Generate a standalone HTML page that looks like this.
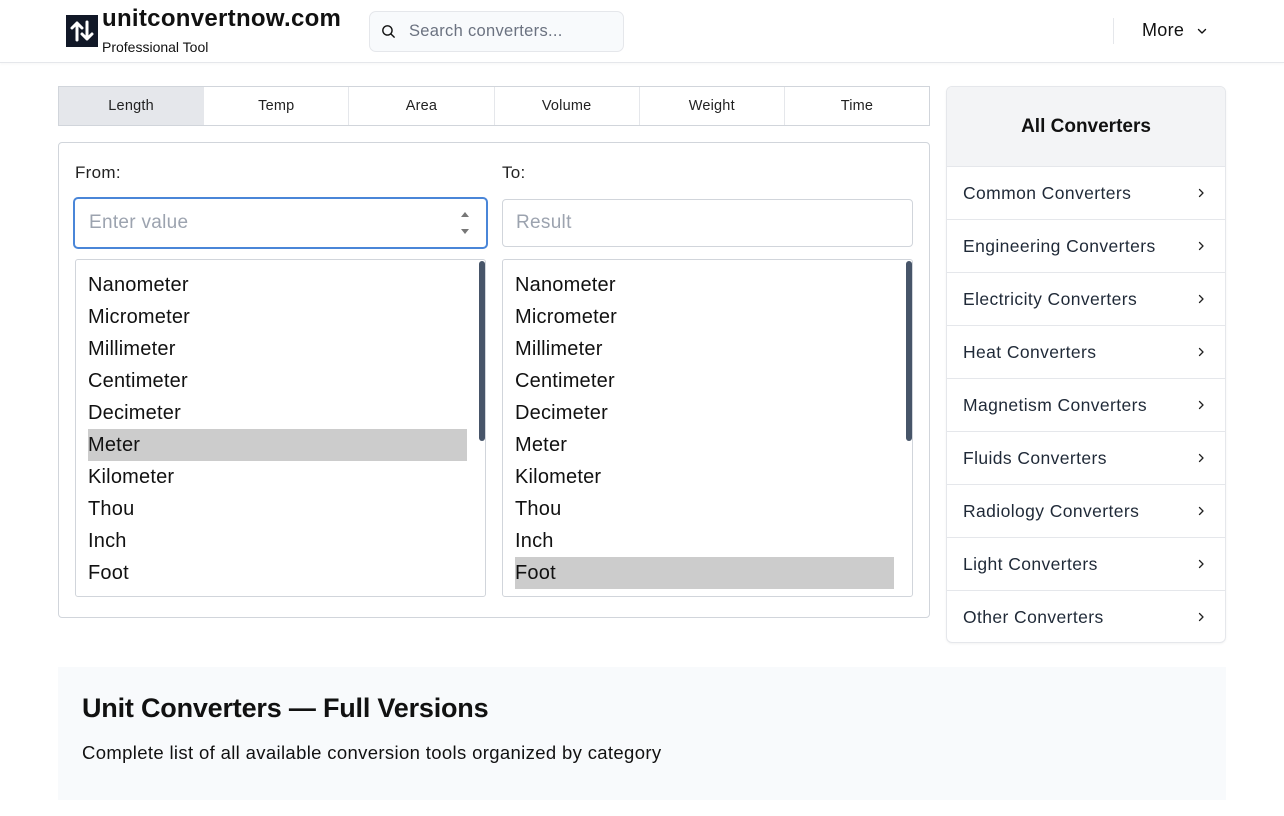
<!DOCTYPE html>
<html><head><style>
*{box-sizing:border-box;margin:0;padding:0}
body{width:1284px;height:816px;background:#fff;font-family:"Liberation Sans",sans-serif;color:#111;position:relative;overflow:hidden}
.a{position:absolute}
.hdr{left:0;top:0;width:1284px;height:63px;border-bottom:1px solid #e5e7eb;box-shadow:0 1px 3px rgba(0,0,0,.04)}
.tabs{left:58px;top:86px;width:872px;height:40px;border:1px solid #d1d5db;display:flex}
.tabs div{flex:1;text-align:center;line-height:38px;font-size:14.5px;letter-spacing:0.2px;border-left:1px solid #e5e7eb;color:#222}
.tabs div:first-child{border-left:none;background:#e5e7eb}
.panel{left:58px;top:142px;width:872px;height:476px;border:1px solid #d1d5db;border-radius:4px}
.lbl{font-size:17px;color:#222;letter-spacing:0.3px}
.inp{border:1px solid #d1d5db;border-radius:4px;font-size:19px;color:#9ca3af;padding-left:13px;line-height:46px;letter-spacing:0.3px}
.list{border:1px solid #d1d5db;border-radius:3px;overflow:hidden}
.list div{font-size:20px;height:32px;line-height:32px;padding-left:0;margin-right:18px;margin-left:12px;letter-spacing:0.2px}
.list .first{margin-top:9px}
.list .sel{background:#cccccc}
.sb{width:6px;background:#475569;border-radius:3px}
.side{left:946px;top:86px;width:280px;height:557px;border:1px solid #e5e7eb;border-radius:6px;overflow:hidden;box-shadow:0 1px 2px rgba(0,0,0,.05)}
.side .h{height:80px;background:#f3f4f6;text-align:center;line-height:80px;font-weight:bold;font-size:19px;border-bottom:1px solid #e5e7eb}
.side .i{height:53px;border-bottom:1px solid #e5e7eb;line-height:52px;padding-left:16px;font-size:17.5px;letter-spacing:0.4px;color:#1f2937;position:relative}
.side .i:last-child{border-bottom:none}
.side .i svg{position:absolute;right:20px;top:20px}
</style></head><body>
<div class="a hdr"></div>
<div class="a" style="left:66px;top:15px;width:32px;height:32px;background:#111827">
<svg width="32" height="32" viewBox="0 0 32 32" fill="none" stroke="#fff" stroke-width="3" stroke-linecap="round" stroke-linejoin="round"><path d="M11 25V8M6 13l5-5 5 5"/><path d="M21 7v17M16 19l5 5 5-5"/></svg></div>
<div class="a" style="left:102px;top:5px;font-size:24px;font-weight:bold;color:#111;letter-spacing:0.3px">unitconvertnow.com</div>
<div class="a" style="left:102px;top:39px;font-size:14px;color:#111">Professional Tool</div>
<div class="a" style="left:369px;top:11px;width:255px;height:41px;border:1px solid #e5e7eb;border-radius:7px;background:#f8fafc"></div>
<svg class="a" style="left:380px;top:23px" width="17" height="17" viewBox="0 0 24 24" fill="none" stroke="#111" stroke-width="2" stroke-linecap="round"><circle cx="10.5" cy="10.5" r="6.5"/><path d="M15.5 15.5L20 20"/></svg>
<div class="a" style="left:409px;top:22px;font-size:16.5px;color:#6b7280;letter-spacing:0.3px">Search converters...</div>
<div class="a" style="left:1113px;top:18px;width:1px;height:26px;background:#e5e7eb"></div>
<div class="a" style="left:1142px;top:20px;font-size:18px;color:#111;letter-spacing:0.3px">More</div>
<svg class="a" style="left:1196px;top:26px" width="12" height="10" viewBox="0 0 12 10" fill="none" stroke="#111" stroke-width="1.4" stroke-linecap="round" stroke-linejoin="round"><path d="M2.5 3.5L6 7l3.5-3.5"/></svg>

<div class="a tabs"><div>Length</div><div>Temp</div><div>Area</div><div>Volume</div><div>Weight</div><div>Time</div></div>

<div class="a panel"></div>
<div class="a lbl" style="left:75px;top:163px">From:</div>
<div class="a lbl" style="left:502px;top:163px">To:</div>
<div class="a inp" style="left:73px;top:197px;width:415px;height:52px;border:2px solid #4a86d8;border-radius:5px;line-height:48px;padding-left:14px">Enter value</div>
<svg class="a" style="left:459px;top:210px" width="12" height="26" viewBox="0 0 12 26" fill="#777"><path d="M2 7l4-5 4 5z"/><path d="M2 19l4 5 4-5z"/></svg>
<div class="a inp" style="left:502px;top:199px;width:411px;height:48px">Result</div>

<div class="a list" style="left:75px;top:259px;width:411px;height:338px">
<div class="first">Nanometer</div><div>Micrometer</div><div>Millimeter</div><div>Centimeter</div><div>Decimeter</div><div class="sel">Meter</div><div>Kilometer</div><div>Thou</div><div>Inch</div><div>Foot</div></div>
<div class="a sb" style="left:479px;top:261px;height:180px"></div>
<div class="a list" style="left:502px;top:259px;width:411px;height:338px">
<div class="first">Nanometer</div><div>Micrometer</div><div>Millimeter</div><div>Centimeter</div><div>Decimeter</div><div>Meter</div><div>Kilometer</div><div>Thou</div><div>Inch</div><div class="sel">Foot</div></div>
<div class="a sb" style="left:906px;top:261px;height:180px"></div>

<div class="a side"><div class="h">All Converters</div>
<div class="i">Common Converters<svg width="8" height="12" viewBox="0 0 8 12" fill="none" stroke="#222" stroke-width="1.3" stroke-linecap="round" stroke-linejoin="round"><path d="M2.5 2.5L6 6 2.5 9.5"/></svg></div>
<div class="i">Engineering Converters<svg width="8" height="12" viewBox="0 0 8 12" fill="none" stroke="#222" stroke-width="1.3" stroke-linecap="round" stroke-linejoin="round"><path d="M2.5 2.5L6 6 2.5 9.5"/></svg></div>
<div class="i">Electricity Converters<svg width="8" height="12" viewBox="0 0 8 12" fill="none" stroke="#222" stroke-width="1.3" stroke-linecap="round" stroke-linejoin="round"><path d="M2.5 2.5L6 6 2.5 9.5"/></svg></div>
<div class="i">Heat Converters<svg width="8" height="12" viewBox="0 0 8 12" fill="none" stroke="#222" stroke-width="1.3" stroke-linecap="round" stroke-linejoin="round"><path d="M2.5 2.5L6 6 2.5 9.5"/></svg></div>
<div class="i">Magnetism Converters<svg width="8" height="12" viewBox="0 0 8 12" fill="none" stroke="#222" stroke-width="1.3" stroke-linecap="round" stroke-linejoin="round"><path d="M2.5 2.5L6 6 2.5 9.5"/></svg></div>
<div class="i">Fluids Converters<svg width="8" height="12" viewBox="0 0 8 12" fill="none" stroke="#222" stroke-width="1.3" stroke-linecap="round" stroke-linejoin="round"><path d="M2.5 2.5L6 6 2.5 9.5"/></svg></div>
<div class="i">Radiology Converters<svg width="8" height="12" viewBox="0 0 8 12" fill="none" stroke="#222" stroke-width="1.3" stroke-linecap="round" stroke-linejoin="round"><path d="M2.5 2.5L6 6 2.5 9.5"/></svg></div>
<div class="i">Light Converters<svg width="8" height="12" viewBox="0 0 8 12" fill="none" stroke="#222" stroke-width="1.3" stroke-linecap="round" stroke-linejoin="round"><path d="M2.5 2.5L6 6 2.5 9.5"/></svg></div>
<div class="i">Other Converters<svg width="8" height="12" viewBox="0 0 8 12" fill="none" stroke="#222" stroke-width="1.3" stroke-linecap="round" stroke-linejoin="round"><path d="M2.5 2.5L6 6 2.5 9.5"/></svg></div>
</div>

<div class="a" style="left:58px;top:667px;width:1168px;height:133px;background:#f8fafc"></div>
<div class="a" style="left:82px;top:693px;font-size:27px;font-weight:bold;color:#111;letter-spacing:-0.2px">Unit Converters — Full Versions</div>
<div class="a" style="left:82px;top:742px;font-size:18.5px;color:#111;letter-spacing:0.35px">Complete list of all available conversion tools organized by category</div>
</body></html>
